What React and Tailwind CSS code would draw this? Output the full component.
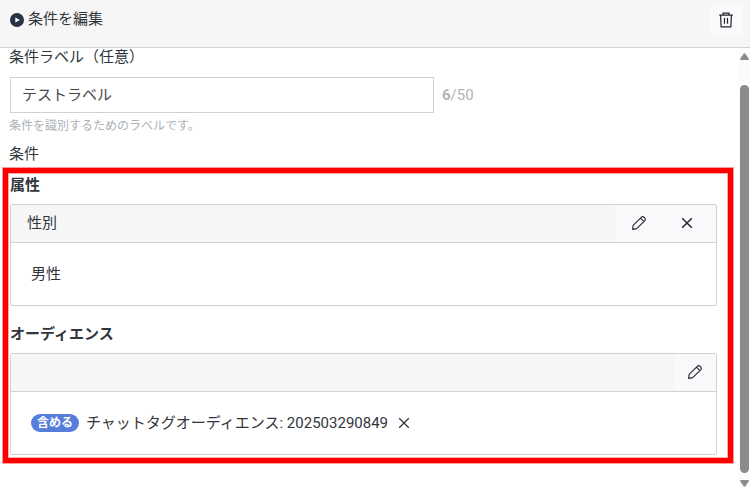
import React, { useState } from 'react';

const TrashIcon = () => (
    <svg className="h-4 w-4" viewBox="0 0 16 16" fill="none" stroke="currentColor" strokeWidth="1.2" aria-hidden="true">
        <path d="M1.2 3.2h13.6M5 3V1.2h6V3M2.6 3.2l.5 11.6h9.8l.5-11.6M6.5 6v5.8M9.5 6v5.8" />
    </svg>
);

const PencilIcon = () => (
    <svg className="h-4 w-4" viewBox="0 0 16 16" fill="none" stroke="currentColor" strokeWidth="1.1" strokeLinejoin="round" aria-hidden="true">
        <path d="M1.6 14.4l.5-4.1 8.2-8q1.2-1.1 2.4-.3l1.2 1.2q1 1.2 0 2.4l-8.2 8zM9.4 3.2l3.6 3.4" />
    </svg>
);

const CloseIcon = ({ className }) => (
    <svg className={className} viewBox="0 0 12 12" fill="none" stroke="currentColor" aria-hidden="true">
        <path d="M1.2 1.2l9.6 9.6M10.8 1.2l-9.6 9.6" />
    </svg>
);

const IconButton = ({ label, className = 'w-12', children }) => (
    <button type="button" aria-label={label} className={`flex items-center justify-center bg-[#f7f9fb] pb-0.5 text-[#25262e] ${className}`}>
        {children}
    </button>
);

const Card = ({ title, actions, children }) => (
    <div className="rounded-xs border border-[#cfd1d3] bg-white">
        <div className="flex h-[38px] items-stretch border-b border-[#cfd1d3] bg-[#f6f6f6] pl-4">
            <div className="flex flex-1 items-center">{title}</div>
            {actions}
        </div>
        <div className="flex h-[62px] items-center px-5">{children}</div>
    </div>
);

const App = () => {
    const [label, setLabel] = useState('テストラベル');

    return (
        <div className="flex h-screen flex-col bg-white font-[Roboto,'Noto_Sans_CJK_JP',sans-serif] text-[15px] text-[#31363c]">
            {/* ヘッダー */}
            <header className="flex h-12 shrink-0 items-center justify-between border-b border-[#d2d2d2] bg-[#f6f6f6] pr-2 pb-2 pl-2.5">
                <h1 className="flex items-center gap-1">
                    <svg className="h-3.5 w-3.5" viewBox="0 0 14 14" aria-hidden="true">
                        <circle cx="7" cy="7" r="7" fill="#273444" />
                        <path d="M5.3 4.4L9.8 7l-4.5 2.6z" fill="#fff" />
                    </svg>
                    条件を編集
                </h1>
                <button type="button" aria-label="削除" className="flex h-8 w-8 items-center justify-center bg-[#f8fafc] text-[#25262e]">
                    <TrashIcon />
                </button>
            </header>

            <div className="flex min-h-0 flex-1">
                <main className="min-w-0 flex-1 overflow-hidden">
                    {/* ラベル入力 */}
                    <div className="px-[9px]">
                        <label htmlFor="condition-label" className="mb-[11px] block leading-[18px]">条件ラベル（任意）</label>
                        <div className="flex items-center gap-2 pl-px">
                            <input
                                id="condition-label"
                                type="text"
                                maxLength={50}
                                value={label}
                                onChange={(e) => setLabel(e.target.value)}
                                className="h-9 w-3/5 max-w-[424px] min-w-0 border border-[#cfd1d3] bg-white px-[11px] pb-1 text-[#44484d]"
                            />
                            <span className="text-[#b1b4b7]">
                                <b>{label.length}</b>/50
                            </span>
                        </div>
                        <p className="text-xs leading-[26px] text-[#adb2b7]">条件を識別するためのラベルです。</p>
                        <h2 className="pt-px leading-7">条件</h2>
                    </div>

                    {/* 条件の内容 */}
                    <div className="mr-[5px] ml-[3px] border-5 border-[#ff0000] pt-px pr-[11px] pb-[3px] pl-0.5 ring-1 ring-[#ff9c9c] inset-ring inset-ring-[#ffa8a8]">
                        <section>
                            <h3 className="mb-2 leading-[22px] font-bold">属性</h3>
                            <Card
                                title="性別"
                                actions={
                                    <>
                                        <IconButton label="性別を編集"><PencilIcon /></IconButton>
                                        <IconButton label="性別を削除"><CloseIcon className="h-3 w-3 stroke-[1.5]" /></IconButton>
                                        <span className="w-[5px] bg-[#f7f9fb]" />
                                    </>
                                }
                            >
                                男性
                            </Card>
                        </section>
                        <section className="mt-[17px]">
                            <h3 className="mb-2 leading-[22px] font-bold">オーディエンス</h3>
                            <Card actions={<IconButton label="オーディエンスを編集" className="w-[42px]"><PencilIcon /></IconButton>}>
                                <span className="mr-[7px] rounded-full bg-[#567ddb] px-1.5 text-xs leading-[18px] font-bold text-white">含める</span>
                                <span>チャットタグオーディエンス: 202503290849</span>
                                <button type="button" aria-label="オーディエンスを削除" className="ml-2.5">
                                    <CloseIcon className="h-3 w-3 stroke-[1.3]" />
                                </button>
                            </Card>
                        </section>
                    </div>
                </main>

                {/* スクロールバー */}
                <div className="flex w-3 shrink-0 flex-col items-center bg-[#fcfcfc] pt-[5px] pb-px text-[#8b8b8b]" aria-hidden="true">
                    <svg className="h-[7px] w-[9px]" viewBox="0 0 9 7" fill="currentColor">
                        <path d="M3.8.6q.7-.8 1.4 0L8.8 5.8Q9.2 7 8 7H1Q-.2 7 .2 5.8z" />
                    </svg>
                    <div className="mt-[25px] mb-[7px] w-[9px] flex-1 rounded-full bg-[#8b8b8b]" />
                    <svg className="h-[7px] w-[9px]" viewBox="0 0 9 7" fill="currentColor">
                        <path d="M3.8 6.4q.7.8 1.4 0L8.8 1.2Q9.2 0 8 0H1Q-.2 0 .2 1.2z" />
                    </svg>
                </div>
            </div>
        </div>
    );
};

export default App;
